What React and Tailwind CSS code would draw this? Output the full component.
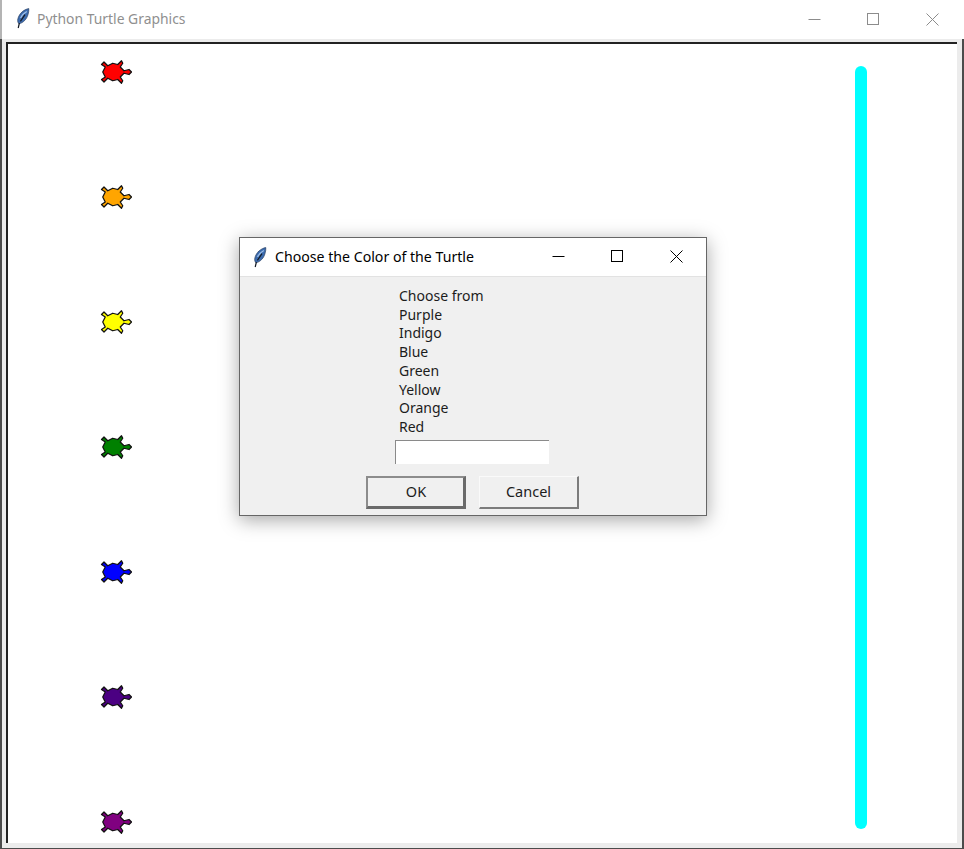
import React from "react";

const TURTLE_COLORS = ["#ff0000", "#ffa500", "#ffff00", "#008000", "#0000ff", "#4b0082", "#800080"];
const CHOICES = ["Choose from", "Purple", "Indigo", "Blue", "Green", "Yellow", "Orange", "Red"];

const TURTLE_POINTS =
  "16,0 14,-2 10,-1 7,-4 9,-7 8,-9 5,-6 1,-7 -3,-5 -6,-8 -8,-6 -5,-4 -7,0 -5,4 -8,6 -6,8 -3,5 1,7 5,6 8,9 9,7 7,4 10,1 14,2";

function Turtle({ color }) {
  return (
    <svg width="36" height="26" viewBox="-10 -10.4 28.8 20.8" className="block">
      <polygon points={TURTLE_POINTS} fill={color} stroke="#111" strokeWidth="1" strokeLinejoin="round" />
    </svg>
  );
}

function Feather({ className }) {
  return (
    <svg width="14" height="21" viewBox="0 0 14 21" className={className}>
      <path d="M12.8 0.6C8.4 1.2 3 5.4 1.8 11.2 1.4 13.2 2 15 3 15.8 7.4 14.8 10.8 11 12 6.6 12.6 4.2 13 2.4 12.8 0.6Z" fill="#3c6cb0" stroke="#2a3f60" strokeWidth="0.7" />
      <path d="M10.8 3.4C8 5 5.6 7.4 4.6 10" fill="none" stroke="#9fc0e8" strokeWidth="1.2" />
      <path d="M9 6.6 4.4 13.4M3.4 15 2.2 20" fill="none" stroke="#141a24" strokeWidth="1.2" />
    </svg>
  );
}

function WindowControls({ color }) {
  return (
    <div className="flex items-center">
      <svg width="13" height="13" viewBox="0 0 13 13">
        <path d="M0.5 6.5H12.5" stroke={color} strokeWidth="1" />
      </svg>
      <svg width="13" height="13" viewBox="0 0 13 13" className="ml-[46px]">
        <rect x="0.5" y="0.5" width="11" height="11" fill="none" stroke={color} strokeWidth="1" />
      </svg>
      <svg width="13" height="13" viewBox="0 0 13 13" className="ml-[46px]">
        <path d="M0.5 0.5 12.5 12.5M12.5 0.5 0.5 12.5" stroke={color} strokeWidth="1" />
      </svg>
    </div>
  );
}

function DialogButton({ label, isDefault }) {
  const edges = isDefault
    ? "pl-[1px] border-t-2 border-l-2 border-r-[3px] border-b-[3px] border-t-[#8c8c8c] border-l-[#8c8c8c] border-r-[#6a6a6a] border-b-[#6a6a6a]"
    : "border-t border-l border-r-2 border-b-2 border-t-[#fafafa] border-l-[#fafafa] border-r-[#7c7c7c] border-b-[#7c7c7c]";
  return (
    <button className={`w-[100px] h-[33px] flex items-center justify-center bg-[#f0f0f0] text-[14.5px] text-[#1c1c1c] ${edges}`}>
      {label}
    </button>
  );
}

export default function App() {
  return (
    <div className="relative w-[964px] h-[849px] overflow-hidden bg-[#ececec] font-['Noto_Sans',sans-serif]">
      {/* main window */}
      <div className="h-[39px] bg-white flex items-center pl-[14px] pr-[25px] border-l-2 border-[#b4b4b4]">
        <Feather className="mr-[7px] mb-[3px]" />
        <span className="text-[13.9px] text-[#8f8f8f] mb-[1px]">Python Turtle Graphics</span>
        <div className="ml-auto mb-[1px]">
          <WindowControls color="#8c8c8c" />
        </div>
      </div>
      <div className="h-[810px] border-l-2 border-r-2 border-b border-[#4c4c4c] pl-[4px] pr-[5px] pt-[3px] pb-[5px]">
        <div className="h-full bg-white border-t-2 border-l-2 border-[#222] flex justify-between pl-[91px] pr-[90px]">
          <div className="flex flex-col gap-[99px] pt-[15px]">
            {TURTLE_COLORS.map((color) => (
              <Turtle key={color} color={color} />
            ))}
          </div>
          <div className="w-[12px] h-[763px] mt-[22px] rounded-full bg-[#00ffff]" />
        </div>
      </div>

      {/* dialog */}
      <div className="absolute left-[239px] top-[237px] w-[468px] h-[279px] bg-[#f0f0f0] border border-[#666] shadow-[0_4px_18px_rgba(0,0,0,0.35)] flex flex-col">
        <div className="h-[39px] shrink-0 bg-white flex items-center pl-[13px] pr-[23px] border-b border-[#e2e2e2]">
          <Feather className="mr-[8px]" />
          <span className="text-[14.15px] text-black mb-[1px]">Choose the Color of the Turtle</span>
          <div className="ml-auto mb-[1px]">
            <WindowControls color="#000" />
          </div>
        </div>
        <div className="flex flex-col pl-[155px] pt-[10px]">
          <div className="pl-[4px] text-[14px] leading-[18.7px] text-[#1c1c1c]">
            {CHOICES.map((choice) => (
              <div key={choice}>{choice}</div>
            ))}
          </div>
          <div className="w-[154px] h-[24px] mt-[3px] bg-white border-t border-l border-[#8a8a8a]" />
        </div>
        <div className="flex gap-[13px] pl-[126px] mt-[12px]">
          <DialogButton label="OK" isDefault />
          <DialogButton label="Cancel" />
        </div>
      </div>
    </div>
  );
}
